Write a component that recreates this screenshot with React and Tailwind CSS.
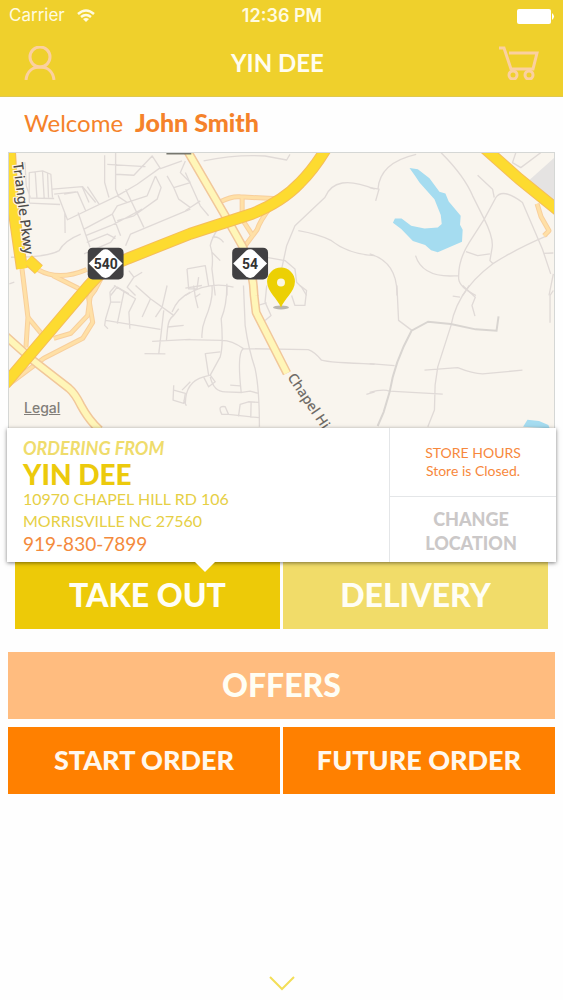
import React from "react";

const highways = [
  "M9 150 L12 205 L21 268",
  "M27 259 L38 269",
  "M4 384 L88 285 Q104 266 127 258 L190 233 L252 213 Q282 201 300 182 Q314 168 326 148",
  "M484 146 L520 178 L562 212",
];

const mainRoads = [
  "M186 148 L225 215 L242 245 Q253 268 254 295 L256 312 L287 373",
  "M4 335 L32 360 L68 388 Q74 393 80 405 Q88 420 99 430",
];

const ramps = [
  "M21 268 L24 292 L27 317 L25 347",
  "M27 317 L42 335",
  "M37 269 Q58 281 86 269",
  "M52 275 L78 288",
  "M103 273 L94 290 L88 298 L92 322 L82 338 L43 358 L8 384",
  "M90 292 L87 315 L70 333 L53 338",
  "M220 201 Q232 195 240 196 L278 198",
  "M242 197 L242 213",
  "M243 220 L252 234",
  "M270 207 Q260 220 257 229 L245 245",
  "M538 203 L542 216 L550 230 L545 235",
];

// small streets, three units to the pixel, one block for each part of the map
const streets = [
  {
    at: "translate(-24 -21)",
    d: "M60 60 L72 50 L76 120 L88 155 M85 170 L85 80 L125 75 L150 85 L155 155 M103 78 L108 155 M125 76 L130 158 M140 80 L143 155 M88 157 L160 158 M85 172 L178 176 M155 130 L245 122 L285 170 M160 145 L225 138 M245 124 L265 170 M260 122 L295 175 M172 148 L200 222 L350 150 L410 115 L480 65 M190 145 L230 138 L255 195 M232 200 L268 305 M192 200 L193 262 M312 28 L312 110 L325 155 M345 20 L345 130 L355 155 M320 55 L435 62 M345 85 L400 88 L455 30 L480 68 L545 45 M375 130 L430 245 M350 150 L380 170 L440 150 L465 90 M465 90 L482 125 L470 160 L400 210 L350 225 M335 205 L350 180 L410 160 M255 270 L330 240 L360 225 L425 190 M250 250 L335 205 L360 270 M258 290 L320 265 L345 278 M30 335 Q140 335 175 315 Q190 285 240 265 M250 325 L330 290 L345 270 M570 190 L390 265 L375 300 M500 90 L520 125 L570 110 M520 125 L535 160 L570 185 M555 45 L540 80 L570 110 M385 375 L400 395 L380 425 L405 450 M400 395 L425 380 M330 450 L350 425 L385 445 M25 415 L40 410",
  },
  {
    at: "translate(531 -21)",
    d: "M55 45 Q150 25 240 30 L305 42 L315 25 M0 80 L45 180 L70 210 M45 165 L0 195 M125 210 Q80 270 75 300 Q85 330 80 370 L90 450 M80 275 Q100 270 115 290 M80 320 L105 345 M570 130 Q450 80 420 155 L330 240 L305 300 L290 370 M340 255 Q400 265 440 285 Q490 325 570 330 M245 335 L300 345 L330 370 L335 410 L350 425 L365 450 M5 370 L60 360 L70 420 M5 370 L10 430 L35 430 L40 395 M0 450 Q70 405 145 425 M125 415 L125 450",
  },
  {
    at: "translate(1086 -21)",
    d: "M0 125 L28 130 L18 165 M25 130 Q30 50 140 25 M215 20 Q285 90 310 150 L345 220 Q375 280 368 310 L362 345 L372 355 M325 88 L370 130 L375 155 M515 20 L455 65 L430 50 L440 20 M280 450 Q310 400 370 355 Q440 310 535 270 M320 450 Q270 425 268 400 Q265 345 300 290 L345 220 L380 155 Q400 125 460 170 L520 310 L545 385 M290 318 L325 330 L362 325 M138 330 Q160 400 268 390 M0 325 Q85 350 82 450 M523 323 L553 322 M553 385 L540 450",
  },
  {
    at: "translate(-24 399)",
    d: "M345 0 L328 20 L330 50 L315 100 L312 120 L322 130 M328 20 L330 50 L360 50 M315 105 L480 132 M340 0 L405 40 L385 80 L388 130 M370 20 L350 115 M405 0 L450 40 L520 90 L535 70 M450 40 L425 95 M500 0 L485 65 L465 95 M570 20 Q530 40 515 80 M490 75 L475 205 M520 90 Q505 100 502 125 L550 120 M502 125 L498 165 M455 168 L570 162 M432 205 L495 206 M520 300 L518 345 L550 355 L555 325 L520 315 M545 315 L570 290 M550 345 L558 362",
  },
  {
    at: "translate(531 399)",
    d: "M80 0 Q85 40 60 100 Q48 130 50 158 M125 0 Q125 60 108 100 Q115 180 105 215 L75 270 M175 0 L180 120 Q190 190 210 250 Q223 310 223 425 M0 163 L110 165 Q140 165 175 190 L370 193 Q390 200 410 225 Q430 232 570 237 M0 8 L50 0 M25 0 L30 35 L38 68 M30 35 L45 25 M105 200 L60 205 L70 270 M0 355 Q0 290 55 275 L75 270 L90 290 L70 305 L55 275 M75 275 Q85 320 120 320 L170 322 L195 318 L220 325 M175 190 Q155 200 168 320 M135 300 L165 302 M160 395 L165 358 L190 350 L222 352 M198 350 L197 398 M222 398 L130 388 L120 365 Q95 360 110 388 L130 388 M245 0 L240 50 L258 90 L240 105 M320 30 L330 60 L360 60 L365 15 L345 0 M218 60 L245 52 M570 320 L545 328",
  },
  {
    at: "translate(1086 399)",
    d: "M82 0 L87 105 L127 135 M300 0 Q255 60 245 120 L205 245 L197 300 L195 375 L175 425 M280 0 L318 35 L308 60 L317 92 M250 32 L272 35 M165 255 L265 247 Q310 265 340 266 L460 255 M0 235 L75 241 M0 322 Q40 310 60 318 L220 327 M553 15 L543 30 L543 112",
  },
];

function Shield({ x, y, label }) {
  return (
    <g transform={`translate(${x} ${y})`}>
      <rect x="-18" y="-16" width="36" height="32" rx="5" fill="#414042" />
      <path d="M-17 0 L-4 -13 Q0 -16 4 -13 L17 0 L4 13 Q0 16 -4 13Z" fill="#fff" />
      <text
        y="5"
        textAnchor="middle"
        className="font-[Roboto,sans-serif] text-[14px] font-bold"
        fill="#333"
      >
        {label}
      </text>
    </g>
  );
}

function StoreMap() {
  return (
    <svg
      viewBox="0 0 1641 828"
      preserveAspectRatio="xMidYMid slice"
      className="block h-full w-full"
      role="img"
      aria-label="Map of the store"
    >
      <rect width="1641" height="828" fill="#f9f5ee" />
      <path d="M1566 82 L1641 15 V175Z" fill="#e5e3e2" />

      <g fill="none" stroke="#e0dad7" strokeWidth="4" strokeLinejoin="round">
        {streets.map((s) => (
          <path key={s.at} transform={s.at} d={s.d} />
        ))}
      </g>
      <path
        d="M1110 822 L1128 780 L1146 720 Q1160 630 1212 535 L1262 508 L1330 515 L1405 531 L1468 535 L1474 492"
        fill="none"
        stroke="#d9d5d1"
        strokeWidth="6"
      />

      {/* lake */}
      <g transform="translate(1086 -21)" fill="#a5dcf0">
        <path d="M120 66 L145 70 L180 97 L210 138 L228 143 L238 167 L274 210 L272 237 L280 252 L278 288 L205 320 L185 314 L167 298 L130 286 L95 250 L70 231 L76 218 L96 218 L125 240 L165 248 L205 245 L217 235 L214 208 L195 160 L150 110 L138 92Z" />
        <path d="M462 845 L475 824 L510 828 L538 840 L542 850Z" />
      </g>

      <g
        transform="scale(3) translate(-8 -152)"
        fill="none"
        strokeLinejoin="round"
      >
        <g stroke="#f8cf9c" strokeWidth="5">
          {ramps.map((d) => (
            <path key={d} d={d} />
          ))}
        </g>
        <g stroke="#ffe0a6" strokeWidth="3">
          {ramps.map((d) => (
            <path key={d} d={d} />
          ))}
        </g>
        <g stroke="#f1c79a" strokeWidth="9">
          {mainRoads.map((d) => (
            <path key={d} d={d} />
          ))}
        </g>
        <g stroke="#fff6b8" strokeWidth="6">
          {mainRoads.map((d) => (
            <path key={d} d={d} />
          ))}
        </g>
        <g stroke="#f5bd5c" strokeWidth="12">
          {highways.map((d) => (
            <path key={d} d={d} />
          ))}
        </g>
        <g stroke="#fddb30" strokeWidth="10">
          {highways.map((d) => (
            <path key={d} d={d} />
          ))}
        </g>
        <path d="M166 152 H191" stroke="#77776f" strokeWidth="3" />
      </g>

      <g transform="scale(3) translate(-8 -152)">
        <g
          className="font-['Noto_Sans'] text-[14px] font-medium"
          stroke="#f9f5ed"
          strokeWidth="2"
          paintOrder="stroke"
        >
          <text transform="translate(12 162) rotate(83)" fill="#4f4c49">
            Triangle Pkwy
          </text>
          <text transform="translate(287 377) rotate(56)" fill="#6f6b67">
            Chapel Hi
          </text>
        </g>
        <Shield x={105} y={263} label="540" />
        <Shield x={250} y={263} label="54" />

        {/* store pin */}
        <ellipse cx="281" cy="307" rx="8" ry="2" fill="#b9b6af" />
        <path
          d="M281 307 C278 299 267 291 267 281 A14 14 0 0 1 295 281 C295 291 284 299 281 307Z"
          fill="#ecd004"
        />
        <circle cx="281" cy="282" r="4" fill="#fbf7e2" />
      </g>
    </svg>
  );
}

function StatusBar() {
  return (
    <div className="grid h-8 grid-cols-3 items-center pr-2 pl-[9px] font-[Inter,sans-serif] text-[#fffbe0]">
      <div className="flex items-center gap-3 text-[17px]">
        <span>Carrier</span>
        <svg viewBox="0 0 18 14" className="h-[14px] w-[18px]" fill="none">
          <path d="M1 5 Q9 -2 17 5" stroke="currentColor" strokeWidth="2.500" />
          <path d="M4 8 Q9 4 14 8" stroke="currentColor" strokeWidth="2.500" />
          <path d="M9 13 L6 10 Q9 8 12 10Z" fill="currentColor" />
        </svg>
      </div>
      <span className="text-center text-lg font-semibold whitespace-nowrap">12:36 PM</span>
      <svg viewBox="0 0 38 15" className="h-[15px] w-[38px] justify-self-end" fill="#fff">
        <rect width="34" height="15" rx="2" />
        <path d="M35 4 Q39 7.500 35 11Z" />
      </svg>
    </div>
  );
}

function Header() {
  return (
    <header className="border-b border-[#dfc850] bg-[#efd02c]">
      <StatusBar />
      <div className="flex h-16 items-center justify-between px-6 pb-0.5">
        <button type="button" aria-label="Account" className="text-[#fbd0a0]">
          <svg viewBox="0 0 32 34" className="h-[34px] w-8" fill="none" stroke="currentColor" strokeWidth="3">
            <circle cx="16" cy="11" r="10" />
            <path d="M2 34 C3 25 9 21 16 21 C23 21 29 25 30 34" />
          </svg>
        </button>
        <h1 className="text-2xl font-bold text-[#fffdf0]">YIN DEE</h1>
        <button type="button" aria-label="Cart" className="text-[#fbd0a0]">
          <svg viewBox="0 0 40 34" className="h-[34px] w-10" fill="none" stroke="currentColor" strokeWidth="3">
            <path d="M0 2 H5 L12 23 H34 L38 7 H10" />
            <circle cx="14" cy="29" r="4" />
            <circle cx="30" cy="29" r="4" />
          </svg>
        </button>
      </div>
    </header>
  );
}

function StoreCard() {
  return (
    <section className="relative z-10 -mx-px flex bg-white shadow-[0_1px_4px_rgba(0,0,0,0.5)]">
      <div className="flex-1 pt-2 pb-1.5 pl-4">
        <p className="text-lg leading-6 font-bold text-[#efdc6c] italic">ORDERING FROM</p>
        <h2 className="text-[28px] leading-7 font-black text-[#ecca0c]">YIN DEE</h2>
        <address className="text-base leading-[22px] text-[#e6cf45] not-italic">
          10970 CHAPEL HILL RD 106
          <br />
          MORRISVILLE NC 27560
        </address>
        <a href="tel:919-830-7899" className="block text-[19px] leading-6 text-[#f48a3c]">
          919-830-7899
        </a>
      </div>
      <div className="flex w-[167px] flex-col border-l border-[#e4e6e8] text-center">
        <div className="flex h-[69px] flex-col justify-center border-b border-[#e4e6e8] text-sm leading-[18px] text-[#f7883c]">
          <p>STORE HOURS</p>
          <p>Store is Closed.</p>
        </div>
        <button type="button" className="flex-1 pr-1 pt-0.5 text-lg leading-6 font-black text-[#cbc8c8]">
          CHANGE
          <br />
          LOCATION
        </button>
      </div>
      <svg
        viewBox="0 0 20 10"
        className="absolute top-full left-[36%] h-[10px] w-5 -translate-x-1/2"
        fill="#fff"
      >
        <path d="M0 0 H20 L10 10Z" />
      </svg>
    </section>
  );
}

export default function App() {
  return (
    <div className="flex min-h-screen flex-col bg-[#fefefe] font-[Lato,sans-serif]">
      <Header />

      <main className="px-2">
        <p className="flex h-[55px] items-center gap-3 px-4 pb-1 text-2xl text-[#f5822a]">
          <span>Welcome</span>
          <strong className="text-[25px] font-black">John Smith</strong>
        </p>

        <div className="relative h-[276px] border border-b-0 border-[#d5d7d5]">
          <StoreMap />
          <a
            href="#legal"
            className="absolute bottom-3 left-[15px] font-[Inter,sans-serif] text-sm leading-4 font-medium text-[#827e79] underline"
          >
            Legal
          </a>
        </div>

        <StoreCard />

        <div className="grid grid-cols-2 gap-[3px] px-[7px] text-[32px] font-black text-[#fffef4]">
          <button type="button" className="h-[67px] bg-[#edca08] pb-0.5">
            TAKE OUT
          </button>
          <button type="button" className="h-[67px] bg-[#f1dc69] pb-0.5">
            DELIVERY
          </button>
        </div>

        <button
          type="button"
          className="mt-[23px] block h-[67px] w-full bg-[#ffbc7f] pb-0.5 text-[32px] font-black text-[#fffef4]"
        >
          OFFERS
        </button>
        <div className="mt-2 grid grid-cols-2 gap-[3px] text-[27px] font-black text-[#fff8ee]">
          <button type="button" className="h-[67px] bg-[#ff8000]">
            START ORDER
          </button>
          <button type="button" className="h-[67px] bg-[#ff8000]">
            FUTURE ORDER
          </button>
        </div>
      </main>

      <button type="button" aria-label="More" className="mx-auto mt-auto block text-[#f3de58]">
        <svg viewBox="0 0 26 24" className="h-6 w-[26px]" fill="none" stroke="currentColor" strokeWidth="2">
          <path d="M1 1 L13 13 L25 1" />
        </svg>
      </button>
    </div>
  );
}
